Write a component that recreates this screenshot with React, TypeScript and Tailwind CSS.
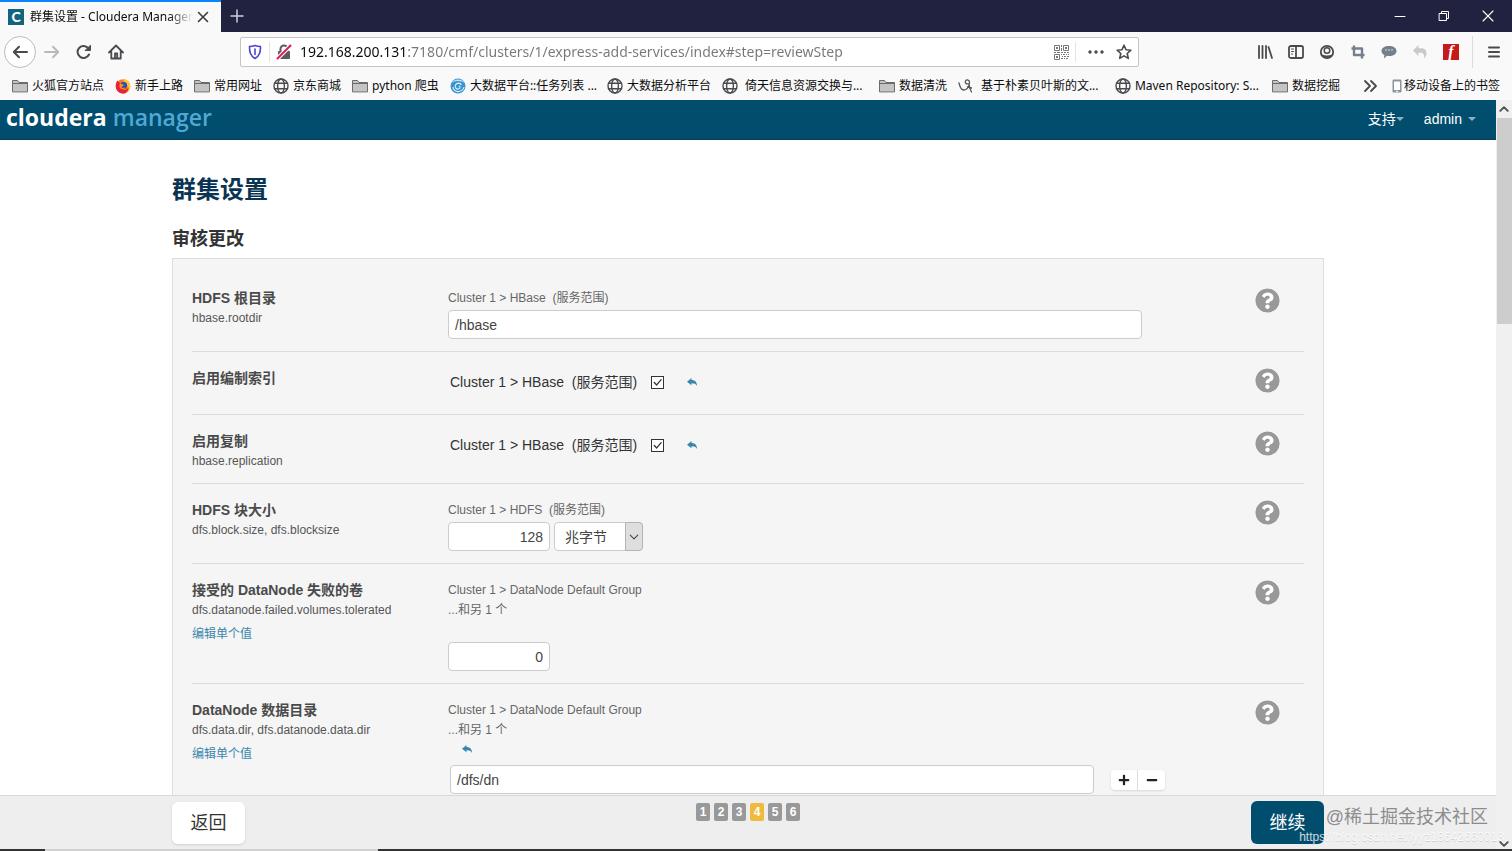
import clsx from 'clsx';
import React from 'react';
import { FaMinus, FaPlus, FaQuestionCircle } from 'react-icons/fa';

type IconProps = { className?: string };

const Stroke: React.FC<React.PropsWithChildren<IconProps & { width?: number }>> = ({
  className = 'size-4',
  width = 2,
  children,
}) => (
  <svg
    viewBox="0 0 16 16"
    className={clsx('shrink-0', className)}
    fill="none"
    stroke="currentColor"
    strokeWidth={width}
    strokeLinecap="round"
    strokeLinejoin="round"
    aria-hidden="true"
  >
    {children}
  </svg>
);

const FolderIcon = () => (
  <Stroke width={1}>
    <path d="M.5 13.5v-11h5l1.5 2h8.5v9z" fill="#c4c4c4" stroke="#6b6b6b" />
    <path d="M1 5.5h14" stroke="#6b6b6b" />
  </Stroke>
);

const GlobeIcon = () => (
  <Stroke width={1.4} className="size-4 text-[#4a4a4f]">
    <circle cx="8" cy="8" r="7" />
    <ellipse cx="8" cy="8" rx="3.4" ry="7" />
    <path d="M1.5 5.3h13M1.5 10.7h13" />
  </Stroke>
);

const FirefoxIcon = () => (
  <svg viewBox="0 0 16 16" className="size-4 shrink-0" aria-hidden="true">
    <circle cx="8" cy="8.4" r="7.2" fill="#ff7a1a" />
    <path d="M8 1c4 .5 7.5 3.5 7.3 7.5S12 15.6 8 15.6c3-1.6 5.5-4 4.5-7.6C12 5.2 9 4.5 8 1z" fill="#ffc928" />
    <path d="M.8 8.5C.6 5.5 1.5 3.5 2.6 2.6l1 1.6C6 3.5 4 8 6.5 10.5S12 12 13.5 9c.5 4-2.5 6.6-5.5 6.6S1 13 .8 8.5z" fill="#e8223c" />
    <circle cx="8.7" cy="7.4" r="3.4" fill="#2b4fb8" />
    <path d="M4.5 6c2-.8 3 .6 4.5.8-.3 1.5-2 1.3-2.5 2.4 1 1 2.5.8 4 .3-1 2-5 2.3-6-.3z" fill="#ff8a1e" />
  </svg>
);

const SwirlIcon = () => (
  <svg viewBox="0 0 16 16" className="size-4 shrink-0" aria-hidden="true">
    <circle cx="8" cy="8" r="7.5" fill="#3b93d0" />
    <path d="M1 5c3-4 10-5 14 0-3-2-9-3-14 0z" fill="#bfe3f5" />
    <path d="M11.5 7c-1-2.5-5-2.5-6 0s1 4.5 3 4 2-3 .3-3M3 9c0 3 3 5 6 4.5s4.5-2 5-4.5" fill="none" stroke="#d9f1fb" strokeWidth="1.1" />
  </svg>
);

const ScribbleIcon = () => (
  <Stroke width={1.3} className="size-4 text-[#55555a]">
    <path d="M1 5c1 4 2 7 4.5 7C9 12 11 8 11.500 4.500 12 2 8.500 1 7.500 3s1 3.500 3.500 2.500c0 3 1 6 2.500 8.500M9.500 9l4 1" />
  </Stroke>
);

const PhoneIcon = () => (
  <svg viewBox="0 0 10 16" className="h-4 w-2.5 shrink-0" aria-hidden="true">
    <rect x=".5" y="1.5" width="9" height="13" rx="1.2" fill="#8d959c" />
    <rect x="2" y="3.5" width="6" height="8.5" fill="#fff" />
    <rect x="4" y="12.8" width="2" height="1" fill="#fff" />
  </svg>
);

const QrIcon = () => (
  <svg viewBox="0 0 15 15" className="size-[15px] shrink-0" fill="none" stroke="#77777b" aria-hidden="true">
    <path d="M.5.5h5v5h-5zM9.5.5h5v5h-5zM.5 9.5h5v5h-5z" />
    <path d="M2 3h2M11 3h2M2 12h2" strokeWidth="2" />
    <path d="M7.5 0v2M7.5 3v3M0 7.5h2M3 7.5h3M7 7.5h2M10 7.5h2M13 7.5h2M7 9.5h1M9 9.5h2M12 9.5h1M14 9.5h1M8 11.5h1M10 11.5h2M13 11.5h2M7 13.5h2M10 13.5h1M12 13.5h2" />
  </svg>
);

type Bookmark = { icon: React.FC; label: string; clipped?: boolean; wide?: boolean };

const bookmarks: Bookmark[] = [
  { icon: FolderIcon, label: '火狐官方站点' },
  { icon: FirefoxIcon, label: '新手上路' },
  { icon: FolderIcon, label: '常用网址' },
  { icon: GlobeIcon, label: '京东商城' },
  { icon: FolderIcon, label: 'python 爬虫' },
  { icon: SwirlIcon, label: '大数据平台::任务列表 ...', clipped: true },
  { icon: GlobeIcon, label: '大数据分析平台' },
  { icon: GlobeIcon, label: '倚天信息资源交换与...', clipped: true, wide: true },
  { icon: FolderIcon, label: '数据清洗' },
  { icon: ScribbleIcon, label: '基于朴素贝叶斯的文...', clipped: true, wide: true },
  { icon: GlobeIcon, label: 'Maven Repository: S...', clipped: true },
  { icon: FolderIcon, label: '数据挖掘' },
];

const TabStrip = () => (
  <div className="flex h-8 items-stretch bg-[#20223f] text-white">
    <div className="flex w-[221px] items-center gap-1.5 border-t-2 border-[#0a84ff] bg-[#f9f9fa] pl-2 text-[#0c0c0d]">
      <span className="flex size-4 shrink-0 items-center justify-center bg-[#12657f] font-['Lato'] text-sm leading-4 font-black text-white">
        C
      </span>
      <span className="shrink-0 mask-r-from-85% text-xs whitespace-nowrap">
        群集设置 - Cloudera Manager
      </span>
      <button type="button" aria-label="关闭标签页" className="-ml-1 text-[#3a3a3e]">
        <Stroke width={1.6}>
          <path d="M3.5 3.5l9 9M12.5 3.5l-9 9" />
        </Stroke>
      </button>
    </div>
    <button type="button" aria-label="新建标签页" className="px-2 text-[#d0d0dc]">
      <Stroke width={1.5}>
        <path d="M8 2v12M2 8h12" />
      </Stroke>
    </button>
    <div className="ml-auto flex items-center gap-7 pr-4">
      <button type="button" aria-label="最小化">
        <Stroke width={1}>
          <path d="M3 8.5h10" />
        </Stroke>
      </button>
      <button type="button" aria-label="还原">
        <Stroke width={1}>
          <path d="M3.5 5.5h7v7h-7zM5.5 5.5v-2h7v7h-2" />
        </Stroke>
      </button>
      <button type="button" aria-label="关闭">
        <Stroke width={1.1}>
          <path d="M3 3l10 10M13 3L3 13" />
        </Stroke>
      </button>
    </div>
  </div>
);

const AddressBar = () => (
  <div className="flex h-[30px] w-[899px] items-center rounded-xs border border-[#c4c4c8] bg-white px-1.5 text-[#4a4a4f]">
    <Stroke width={1.6} className="size-4 text-[#4b43d6]">
      <path d="M8 1.5c2 .8 4 1 5.5 1 0 5-.5 9-5.5 12-5-3-5.5-7-5.5-12 1.5 0 3.5-.2 5.5-1z" />
      <path d="M8 5v5.5" />
    </Stroke>
    <span className="mx-1.5 h-5 w-px bg-[#e4e4e6]" />
    <svg viewBox="0 0 16 16" className="size-4 shrink-0" aria-hidden="true">
      <path d="M4.5 7V5a3.5 3.5 0 017 0v2" fill="none" stroke="#5a5a5f" strokeWidth="2" />
      <rect x="2" y="7" width="12" height="8" rx="1" fill="#5a5a5f" />
      <path d="M1.5 14.5l13-13" stroke="#fff" strokeWidth="4" />
      <path d="M1.5 14.5l13-13" stroke="#e3194f" strokeWidth="2" strokeLinecap="round" />
    </svg>
    <input
      aria-label="地址"
      defaultValue="192.168.200.131:7180/cmf/clusters/1/express-add-services/index#step=reviewStep"
      className="ml-2 min-w-0 flex-1 bg-linear-to-r from-[#0c0c0d] from-[107px] to-[#77777b] to-[107px] bg-clip-text text-sm text-transparent outline-none"
    />
    <QrIcon />
    <span className="mx-1.5 h-5 w-px bg-[#e4e4e6]" />
    <button type="button" aria-label="页面操作" className="mx-1.5">
      <svg viewBox="0 0 16 16" className="size-4" fill="currentColor" aria-hidden="true">
        <circle cx="2" cy="8" r="1.7" />
        <circle cx="8" cy="8" r="1.7" />
        <circle cx="14" cy="8" r="1.7" />
      </svg>
    </button>
    <button type="button" aria-label="添加书签" className="ml-1.5">
      <Stroke width={1.6}>
        <path d="M8 1.2l2 4.5 4.9.5-3.7 3.3 1.1 4.9L8 11.9l-4.3 2.5 1.1-4.9L1.1 6.2 6 5.7z" />
      </Stroke>
    </button>
  </div>
);

const ToolbarIcons = () => (
  <div className="ml-auto flex items-center gap-[15px] pr-2.5 text-[#4a4a4f]">
    <Stroke>
      <path d="M2 2v12M5.5 2v12M9 2v12M11.5 3L15 14" strokeWidth="1.8" />
    </Stroke>
    <Stroke width={1.8}>
      <rect x="1" y="2" width="14" height="12" rx="1.8" />
      <path d="M8 2v12" />
      <path d="M3.5 5h2M3.5 7.5h2M3.5 10h1" strokeWidth="1.1" />
    </Stroke>
    <svg viewBox="0 0 16 16" className="size-4" aria-hidden="true">
      <circle cx="8" cy="8" r="6.2" fill="none" stroke="currentColor" strokeWidth="1.8" />
      <circle cx="8" cy="6.5" r="2.8" fill="none" stroke="currentColor" strokeWidth="1.5" />
      <path d="M3 10.5c3 1.3 7 1.3 10 0-1 2.7-3 3.7-5 3.7s-4-1-5-3.7z" fill="currentColor" />
    </svg>
    <Stroke width={2.4} className="size-4 text-[#75808c]">
      <path d="M4 1.5V11h10.5M1.5 4.5H12V14.5" strokeLinecap="butt" />
    </Stroke>
    <svg viewBox="0 0 16 16" className="size-4" aria-hidden="true">
      <path d="M8 2c4.500 0 7.500 2 7.500 5s-3 5-7.500 5c-.7 0-1.300 0-2-.2L3 14.500l.3-3.600C1.500 10 .5 8.700.5 7c0-3 3-5 7.500-5z" fill="#75808c" />
      <circle cx="5" cy="6" r=".7" fill="#fff" />
      <circle cx="8" cy="6" r=".7" fill="#fff" />
      <circle cx="11" cy="6" r=".7" fill="#fff" />
    </svg>
    <svg viewBox="0 0 16 16" className="size-4" aria-hidden="true">
      <path d="M6.500 1v3.200h2.800c3.500 0 5.200 2.300 5.200 5 0 2-1 3.800-2.500 5 .6-3-.4-5.500-3.200-5.500H6.500V12L1 6.500z" fill="#c9c9cc" />
    </svg>
    <span className="flex size-4 items-center justify-center bg-[#c41a1c] font-['Liberation_Serif'] text-base leading-4 font-bold text-white italic">
      f
    </span>
    <span className="-mx-0.5 h-8 w-px bg-[#dcdcde]" />
    <button type="button" aria-label="菜单">
      <Stroke>
        <path d="M3 3.5h10M3 8h10M3 12.5h10" />
      </Stroke>
    </button>
  </div>
);

const NavToolbar = () => (
  <div className="flex h-10 items-center pl-1">
    <div className="flex items-center gap-4 text-[#4a4a4f]">
      <button
        type="button"
        aria-label="后退"
        className="-mr-2 flex size-8 items-center justify-center rounded-full border border-[#bdbdc1] bg-white"
      >
        <Stroke>
          <path d="M15 8H2M7 2.8L1.8 8 7 13.2" />
        </Stroke>
      </button>
      <button type="button" aria-label="前进" className="text-[#b9b9bc]">
        <Stroke>
          <path d="M1 8h13M9 2.8L14.2 8 9 13.2" />
        </Stroke>
      </button>
      <button type="button" aria-label="刷新">
        <Stroke>
          <path d="M13 10.5A6 6 0 1112.5 4.5" />
          <path d="M14.5 1.5v5h-5z" fill="currentColor" strokeWidth="1" />
        </Stroke>
      </button>
      <button type="button" aria-label="主页">
        <Stroke width={1.8}>
          <path d="M1 8.5l7-7 7 7M3.3 7.5v7h9.400v-7" />
          <path d="M7 14V9.5h2.2V14" />
        </Stroke>
      </button>
    </div>
    <div className="ml-[116px]">
      <AddressBar />
    </div>
    <ToolbarIcons />
  </div>
);

const BookmarksBar = () => (
  <div className="flex h-7 items-center overflow-hidden px-3 text-xs whitespace-nowrap text-[#0c0c0d]">
    <div className="flex items-center gap-[11px]">
      {bookmarks.map(({ icon: Icon, label, clipped, wide }) => (
        <a
          key={label}
          href="#bookmark"
          className={clsx(
            'flex shrink-0 items-center',
            clipped && 'w-[146px]',
            wide ? 'gap-[7px]' : 'gap-1'
          )}
        >
          <Icon />
          {label}
        </a>
      ))}
    </div>
    <div className="ml-auto flex items-center gap-3.5">
      <button type="button" aria-label="更多书签" className="text-[#4a4a4f]">
        <Stroke width={1.8}>
          <path d="M3 3l5 5-5 5M9 3l5 5-5 5" />
        </Stroke>
      </button>
      <a href="#mobile" className="flex items-center gap-0.5">
        <PhoneIcon />
        移动设备上的书签
      </a>
    </div>
  </div>
);

const Caret = () => (
  <svg viewBox="0 0 8 4" className="h-1 w-2" aria-hidden="true">
    <path d="M0 0h8L4 4z" fill="#8fb0c0" />
  </svg>
);

const ManagerHeader = () => (
  <header className="flex h-10 shrink-0 items-center justify-between border-b border-[#0b3a52] bg-[#004d6e] pr-5 pb-0.5 pl-1.5 text-sm text-white">
    <a href="#home" className="flex gap-1.5 pb-1 font-['Open_Sans'] text-[23px] leading-8 font-bold">
      cloudera
      <span className="font-semibold text-[#4fa9d4]">manager</span>
    </a>
    <nav className="flex items-center gap-5">
      <button type="button" className="flex items-center">
        支持
        <Caret />
      </button>
      <button type="button" className="flex items-center gap-1.5">
        admin
        <Caret />
      </button>
    </nav>
  </header>
);

const UndoButton: React.FC<IconProps> = ({ className }) => (
  <button type="button" aria-label="重置为默认值" className={clsx('text-[#3a87ad]', className)}>
    <svg viewBox="0 0 10 8" className="h-2 w-2.5" fill="currentColor" aria-hidden="true">
      <path d="M4.5 0v2C8 2 10 4 10 8 9 6 7.500 5.300 4.500 5.300v2L0 3.700z" />
    </svg>
  </button>
);

type RowProps = {
  title: string;
  property?: string;
  editable?: boolean;
  children: React.ReactNode;
};

const SettingRow: React.FC<RowProps> = ({ title, property, editable, children }) => (
  <div className="flex items-start border-b border-[#dcdcdc] pt-4 pb-3 last:border-b-0">
    <div className="w-64 shrink-0 text-xs leading-5 text-[#555]">
      <h3 className="text-sm leading-5 font-bold text-[#4a4a4a]">{title}</h3>
      {property && <p>{property}</p>}
      {editable && (
        <a href="#edit" className="mt-1 block text-[#3a87ad]">
          编辑单个值
        </a>
      )}
    </div>
    <div className="min-w-0 flex-1">{children}</div>
    <button type="button" aria-label={`帮助：${title}`} className="mr-6 text-[#999]">
      <FaQuestionCircle className="size-[25px] rounded-full bg-white" />
    </button>
  </div>
);

const Scope: React.FC<React.PropsWithChildren> = ({ children }) => (
  <p className="text-xs leading-5 text-[#666]">{children}</p>
);

const field =
  'h-[29px] rounded-sm border border-[#ccc] bg-white px-1.5 text-sm text-[#444] outline-none';

const CheckSetting: React.FC<{ id: string }> = ({ id }) => (
  <div className="mb-1.5 flex h-7 items-center pl-0.5 text-sm text-[#333]">
    <label htmlFor={id}>Cluster 1 &gt; HBase&nbsp; (服务范围)</label>
    <span className="ml-3.5 grid size-[13px]">
      <input
        id={id}
        type="checkbox"
        defaultChecked
        className="peer col-start-1 row-start-1 size-[13px] appearance-none border border-[#333] bg-white"
      />
      <Stroke
        width={1.6}
        className="pointer-events-none invisible col-start-1 row-start-1 size-[13px] text-[#333] peer-checked:visible"
      >
        <path d="M4 8l3 3 5.5-6.5" />
      </Stroke>
    </span>
    <UndoButton className="ml-[23px]" />
  </div>
);

const ReviewForm = () => (
  <section className="border border-[#ddd] bg-[#f5f5f5] px-[19px] pt-[13px]">
    <SettingRow title="HDFS 根目录" property="hbase.rootdir">
      <Scope>Cluster 1 &gt; HBase&nbsp; (服务范围)</Scope>
      <input
        aria-label="HDFS 根目录"
        defaultValue="/hbase"
        className={clsx(field, 'mt-0.5 block w-[86%]')}
      />
    </SettingRow>
    <SettingRow title="启用编制索引">
      <CheckSetting id="indexing" />
    </SettingRow>
    <SettingRow title="启用复制" property="hbase.replication">
      <CheckSetting id="replication" />
    </SettingRow>
    <SettingRow title="HDFS 块大小" property="dfs.block.size, dfs.blocksize">
      <Scope>Cluster 1 &gt; HDFS&nbsp; (服务范围)</Scope>
      <div className="mt-0.5 flex gap-1">
        <input
          aria-label="HDFS 块大小"
          defaultValue="128"
          className={clsx(field, 'w-[102px] text-right')}
        />
        <span className="grid">
          <select
            aria-label="单位"
            className={clsx(field, 'col-start-1 row-start-1 w-[89px] appearance-none pl-2.5')}
          >
            <option>兆字节</option>
          </select>
          <span className="pointer-events-none col-start-1 row-start-1 flex w-[18px] items-center justify-center justify-self-end rounded-r-sm border border-[#b4b4b4] bg-[#dedede] text-[#444]">
            <Stroke width={1.4} className="size-3">
              <path d="M3 5.5l5 5 5-5" />
            </Stroke>
          </span>
        </span>
      </div>
    </SettingRow>
    <SettingRow
      title="接受的 DataNode 失败的卷"
      property="dfs.datanode.failed.volumes.tolerated"
      editable
    >
      <Scope>Cluster 1 &gt; DataNode Default Group</Scope>
      <Scope>...和另 1 个</Scope>
      <input
        aria-label="接受的 DataNode 失败的卷"
        defaultValue="0"
        className={clsx(field, 'mt-[22px] block w-[102px] text-right')}
      />
    </SettingRow>
    <SettingRow
      title="DataNode 数据目录"
      property="dfs.data.dir, dfs.datanode.data.dir"
      editable
    >
      <Scope>Cluster 1 &gt; DataNode Default Group</Scope>
      <Scope>...和另 1 个</Scope>
      <div className="flex h-[18px] items-center pl-3.5">
        <UndoButton />
      </div>
      <div className="mt-[7px] flex items-center pl-0.5">
        <input
          aria-label="DataNode 数据目录"
          defaultValue="/dfs/dn"
          className={clsx(field, 'w-[80%]')}
        />
        <div className="ml-[17px] flex h-5 divide-x divide-[#ddd] rounded-sm bg-white text-[#222] shadow-sm">
          <button type="button" aria-label="添加" className="flex w-[27px] items-center justify-center">
            <FaPlus className="size-3" />
          </button>
          <button type="button" aria-label="删除" className="flex w-[27px] items-center justify-center">
            <FaMinus className="size-3" />
          </button>
        </div>
      </div>
    </SettingRow>
  </section>
);

const WizardFooter = () => (
  <footer className="h-[54px] shrink-0 border-t border-[#d8d8d8] bg-[#eee]">
    <div className="mx-auto flex max-w-[1152px] items-start justify-between">
      <button
        type="button"
        className="mt-1.5 h-[42px] w-[73px] rounded-md bg-white text-lg text-[#333] shadow"
      >
        返回
      </button>
      <ol className="mt-[7px] flex gap-1 text-xs font-bold text-white">
        {[1, 2, 3, 4, 5, 6].map((step) => (
          <li
            key={step}
            className={clsx(
              'flex h-[18px] w-3.5 items-center justify-center rounded-xs',
              step === 4 ? 'bg-[#efbb3c]' : 'bg-[#999]'
            )}
          >
            {step}
          </li>
        ))}
      </ol>
      <button
        type="button"
        className="mt-[5px] h-[43px] w-[73px] rounded-md bg-[#004d6e] text-lg text-white"
      >
        继续
      </button>
    </div>
  </footer>
);

const Scrollbar = () => (
  <div className="flex w-4 shrink-0 flex-col items-center justify-between bg-[#f0f0f0] text-[#505050]">
    <div className="flex w-full flex-col items-center">
      <Stroke width={3} className="my-1 size-2.5">
        <path d="M2 11l6-6 6 6" />
      </Stroke>
      <span className="h-[206px] w-[15px] bg-[#cdcdcd]" />
    </div>
    <Stroke width={3} className="size-2.5">
      <path d="M2 5l6 6 6-6" />
    </Stroke>
  </div>
);

export default function App() {
  return (
    <div className="relative flex h-screen flex-col overflow-hidden bg-white font-['Liberation_Sans','Noto_Sans_CJK_SC',sans-serif]">
      <div className="shrink-0 bg-[#f9f9fa] font-['Noto_Sans','Noto_Sans_CJK_SC',sans-serif]">
        <TabStrip />
        <NavToolbar />
        <BookmarksBar />
      </div>
      <div className="flex min-h-0 flex-1">
        <div className="flex min-w-0 flex-1 flex-col">
          <ManagerHeader />
          <main className="min-h-0 flex-1 overflow-hidden">
            <div className="mx-auto max-w-[1152px] pt-8">
              <h1 className="text-2xl leading-9 font-bold text-[#0b3453]">群集设置</h1>
              <h2 className="mt-[17px] mb-[5px] text-lg leading-7 font-bold text-[#333]">审核更改</h2>
              <ReviewForm />
            </div>
          </main>
          <WizardFooter />
        </div>
        <Scrollbar />
      </div>
      <div className="flex h-0.5 shrink-0 bg-[#333]">
        <span className="ml-[3%] w-[22%] bg-[#d0d0d0]" />
      </div>
      <div className="pointer-events-none absolute right-0 bottom-1.5 text-right">
        <p className="pr-6 text-lg leading-6 text-[#8c8c8c]">@稀土掘金技术社区</p>
        <p className="pr-2 text-xs leading-4 text-white/80 text-shadow-2xs">
          https://blog.csdn.net/lyyz18642660013
        </p>
      </div>
    </div>
  );
}
